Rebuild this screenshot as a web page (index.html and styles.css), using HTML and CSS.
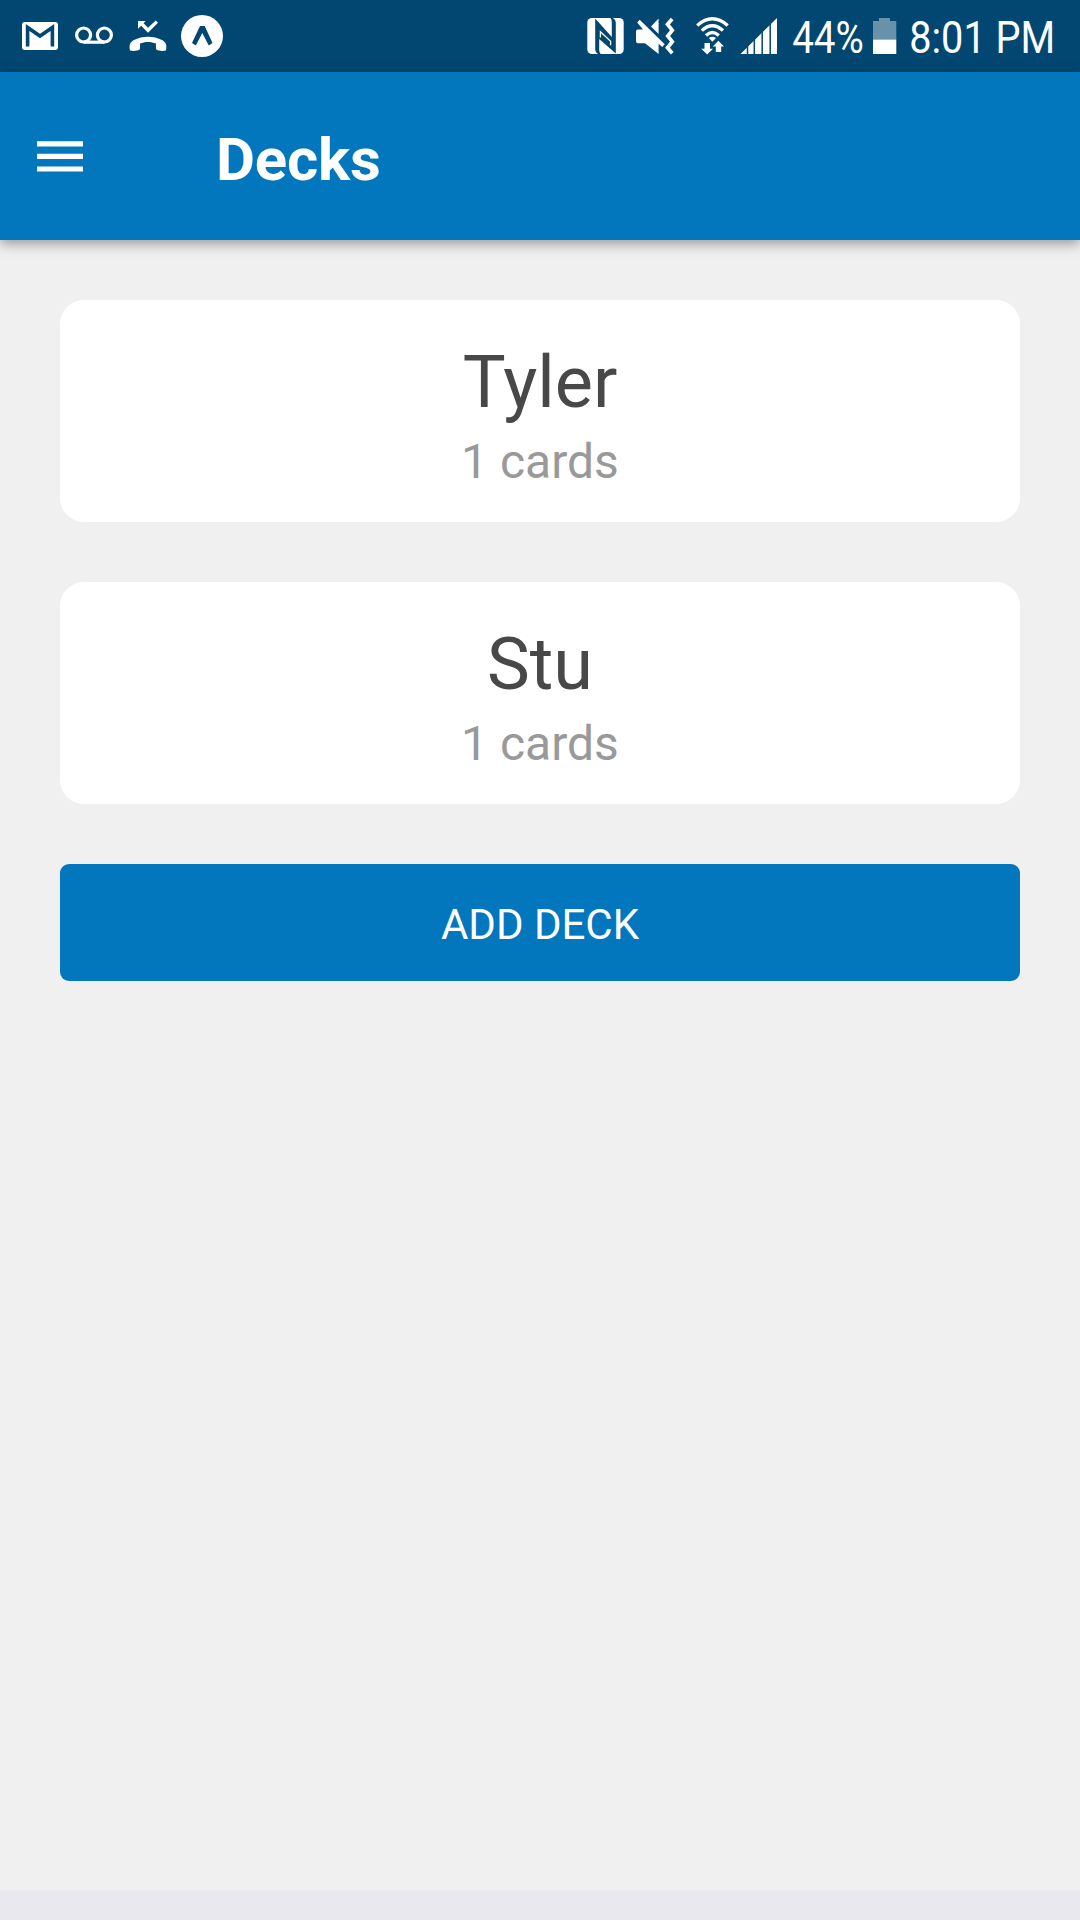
FILE: index.html
```html
<!DOCTYPE html>
<html lang="en">
<head>
<meta charset="utf-8">
<title>Decks</title>
<link rel="stylesheet" href="styles.css">
</head>
<body>
<div class="status">
  <svg class="mail" width="36" height="28" viewBox="22 22 36 28"><rect x="22" y="22" width="36" height="28" rx="3" fill="#fff"/><path d="M27.6 46.5V27.5L40 36 52.4 27.5V46.5" fill="none" stroke="#024771" stroke-width="3.6"/></svg>
  <svg class="voicemail" width="38" height="18" viewBox="75 26 38 18" fill="none" stroke="#fff" stroke-width="3.2"><circle cx="83.6" cy="35" r="7"/><circle cx="104.4" cy="35" r="7"/><path d="M83.6 42.2H104.4"/></svg>
  <svg class="missed" width="38" height="32" viewBox="129 20 38 32"><path d="M138 21H145.6L143.6 23.2 148 27.8 155.7 20.6 158 22.7 148 32.7 141.2 25.7 138 28.8Z" fill="#fff"/><path d="M130 50.5C128.8 44 130.5 42.3 134 40.1 142 35.6 154 35.6 162 40.1 165.5 42.3 167.1 44 166 50.5 162.5 51.3 159 51 156.3 49.5 156 48 155.8 46 156 43.6 151 41.4 145 41.4 140 43.6 140.2 46 140 48 139.7 49.5 137 51 133.5 51.3 130 50.5Z" fill="#fff"/></svg>
  <svg class="expo" width="42" height="42" viewBox="181 15 42 42"><circle cx="202" cy="36" r="21" fill="#fff"/><path d="M200 26H204.7L212.5 43 208.8 45.5 202.3 33 195.8 45.5 192 43Z" fill="#024771"/></svg>
  <span class="spacer"></span>
  <svg class="nfc" width="37" height="36" viewBox="587 18 37 36"><rect x="587.3" y="18" width="36.4" height="36" rx="4.5" fill="#fff"/><path d="M595.2 18.6 611.8 37V22Q611.8 19.5 610.4 18H613Q615.8 19.5 615.8 22.5V53.4L599.2 39V50Q599.2 52.5 600.6 54H598Q595.2 52.5 595.2 49.5Z" fill="#024771"/><path d="M600.4 37.4V31.8L610.6 41.2V45.2" fill="none" stroke="#fff" stroke-width="1.3"/></svg>
  <svg class="mute" width="39" height="37" viewBox="636 18 39 37"><path d="M636 31.2Q636 29.4 638 29.4H643L637.2 22.5 639.7 19.8 664.7 44.2 662.2 47 658.6 43.7V54L645 43.2H638Q636 43.2 636 41.2ZM651 26.6 658.6 18.5V34Z" fill="#fff"/><path d="M672.2 19 667.5 24.4 672.3 30.3 667.7 36 672.3 41.7 667.5 47.8 672.3 53.2" fill="none" stroke="#fff" stroke-width="3.7"/></svg>
  <svg class="wifi" width="33" height="37" viewBox="696 17 33 37"><g fill="none" stroke="#fff" stroke-width="3.3"><path d="M697.2 25.5Q712.3 12 727.7 25.5"/><path d="M701.8 30.6Q712.3 21 723 30.6"/><path d="M706 35.5Q712.3 29.5 718.8 35.5"/></g><path d="M708.8 38Q712.3 35.3 716 38L712.4 41.7ZM704.5 43H710V48.8H713L707.2 54.5 701.2 48.8H704.5ZM718.4 40.8 724 46.5H721.2V52H715.8V46.5H712.8Z" fill="#fff"/></svg>
  <svg class="signal" width="37" height="36" viewBox="740 18 37 36"><path d="M740.5 54 777 18V54Z" fill="#fff"/><path d="M747.5 18V54M754.3 18V54M762.2 18V54M770.2 18V54" stroke="#024771" stroke-width="1.5"/></svg>
  <svg class="percent" width="72" height="54" viewBox="792 9 72 54"><text class="status-text" x="792.2" y="53" textLength="71.6" lengthAdjust="spacingAndGlyphs">44%</text></svg>
  <svg class="battery" width="24" height="37" viewBox="873 18 24 37"><path d="M873 21H879V18H890V21H896.3V39.5H873Z" fill="#6891aa"/><path d="M873 39.5H896.3V54H873Z" fill="#fff"/></svg>
  <svg class="clock" width="148" height="54" viewBox="909 9 148 54"><text class="status-text" x="909.2" y="53" textLength="146" lengthAdjust="spacingAndGlyphs">8:01 PM</text></svg>
</div>
<header class="header">
  <svg class="menu" width="46" height="31" viewBox="37 141 46 31"><path d="M37 143.9H83M37 156.4H83M37 169H83" stroke="#fff" stroke-width="5.2"/></svg>
  <h1 class="title">Decks</h1>
</header>
<main class="content">
  <section class="card"><div class="name">Tyler</div><div class="count">1 cards</div></section>
  <section class="card"><div class="name">Stu</div><div class="count">1 cards</div></section>
  <button class="add">ADD DECK</button>
</main>
<div class="bottom"></div>
</body>
</html>
```

FILE: styles.css
```css
* { box-sizing: border-box; }
body {
  margin: 0;
  height: 1920px;
  display: flex;
  flex-direction: column;
  overflow: hidden;
  background: #f0f0f0;
  font-family: Roboto, sans-serif;
}
svg { display: block; flex: none; overflow: visible; }
.status {
  height: 72px;
  flex: none;
  display: flex;
  align-items: flex-start;
  padding: 0 23px 0 22px;
  background: #024771;
}
.mail { margin-top: 22px; }
.voicemail { margin: 26px 0 0 17px; }
.missed { margin: 20px 0 0 16px; }
.expo { margin: 15px 0 0 14px; }
.spacer { flex: 1; }
.nfc { margin: 18px 12px 0 0; }
.mute { margin: 18px 21px 0 0; }
.wifi { margin: 17px 11px 0 0; }
.signal { margin: 18px 15px 0 0; }
.percent { margin: 9px 9px 0 0; }
.battery { margin: 18px 12px 0 0; }
.clock { margin-top: 9px; }
.status-text { font-family: Roboto, sans-serif; font-size: 45px; fill: #fff; }
.header {
  height: 168px;
  flex: none;
  display: flex;
  align-items: flex-start;
  padding-left: 37px;
  background: #0277bd;
  box-shadow: 0 4px 12px rgba(0, 0, 0, 0.36);
}
.menu { margin-top: 69px; }
.title {
  margin: 53px 0 0 133px;
  font-size: 60px;
  line-height: 70px;
  font-weight: 700;
  letter-spacing: -0.2px;
  color: #fff;
}
.content {
  flex: 1;
  display: flex;
  flex-direction: column;
  gap: 60px;
  padding: 60px;
}
.card {
  height: 222px;
  padding-top: 41px;
  border-radius: 24px;
  background: #fff;
  text-align: center;
}
.name { font-size: 72px; line-height: 84px; color: #484848; }
.count { margin-top: 9px; font-size: 48px; line-height: 56px; color: #999; }
.add {
  height: 117px;
  padding: 36px 0 32px;
  border: 0;
  border-radius: 9px;
  background: #0277bd;
  color: #fff;
  font-family: inherit;
  font-size: 42px;
  line-height: 49px;
}
.bottom { height: 30px; flex: none; background: #e9e8ee; }
```
